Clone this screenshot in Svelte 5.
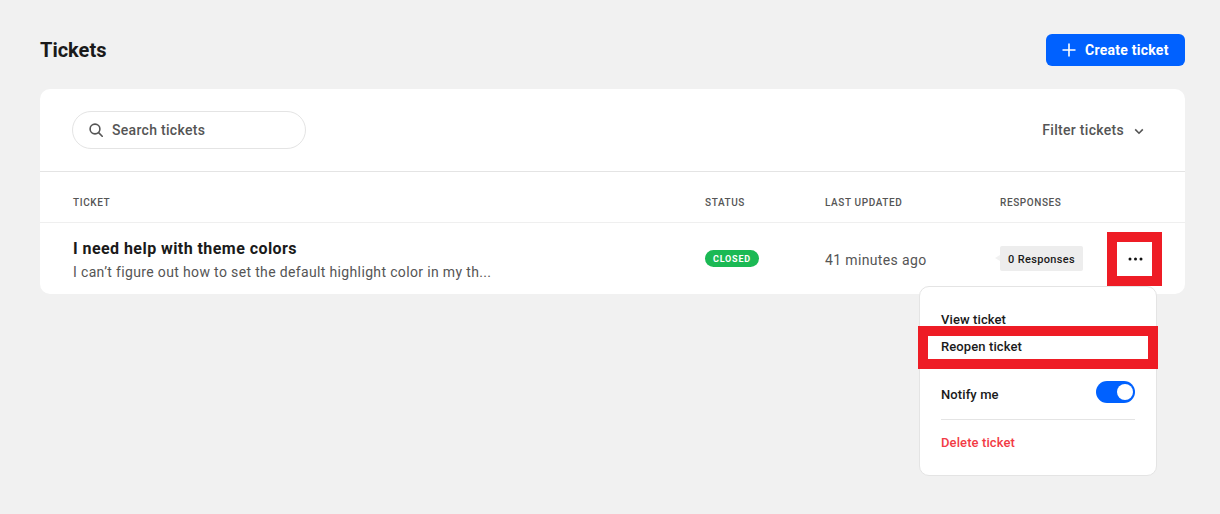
<script>
  let notify = $state(true);
  const ticket = {
    title: 'I need help with theme colors',
    excerpt: 'I can’t figure out how to set the default highlight color in my th...',
    status: 'Closed',
    updated: '41 minutes ago',
    responses: '0 Responses'
  };
</script>

<div class="page">
  <header class="top">
    <h1>Tickets</h1>
    <button class="create">
      <svg width="14" height="14" viewBox="0 0 14 14" fill="none" stroke="#fff" stroke-width="1.6"><path d="M7 .5v13M.5 7h13" /></svg>
      Create ticket
    </button>
  </header>

  <section class="card">
    <div class="toolbar">
      <div class="search">
        <svg width="14" height="14" viewBox="0 0 14 14" fill="none" stroke="#555" stroke-width="1.6"><circle cx="6" cy="6" r="4.9" /><path d="M9.6 9.6l3.6 3.6" stroke-linecap="round" /></svg>
        <span>Search tickets</span>
      </div>
      <div class="filter">
        Filter tickets
        <svg width="10" height="7" viewBox="0 0 10 7" fill="none" stroke="#555" stroke-width="1.6"><path d="M1.2 1.4L5 5.2l3.8-3.8" /></svg>
      </div>
    </div>

    <div class="grid head">
      <div>Ticket</div>
      <div>Status</div>
      <div>Last updated</div>
      <div>Responses</div>
    </div>

    <div class="grid row">
      <div class="info">
        <div class="title">{ticket.title}</div>
        <div class="excerpt">{ticket.excerpt}</div>
      </div>
      <div class="status-cell"><span class="badge">{ticket.status}</span></div>
      <div class="updated">{ticket.updated}</div>
      <div class="resp-cell"><span class="bubble">{ticket.responses}</span></div>
      <div class="actions">
        <button class="more" aria-label="More">
          <svg width="15" height="4" viewBox="0 0 15 4" fill="#111"><circle cx="2" cy="2" r="1.5" /><circle cx="7.5" cy="2" r="1.5" /><circle cx="13" cy="2" r="1.5" /></svg>
        </button>
        <div class="menu">
          <div class="item first">View ticket</div>
          <div class="item reopen">Reopen ticket</div>
          <div class="item notify">
            Notify me
            <button class="switch" class:on={notify} aria-label="Notify me" onclick={() => (notify = !notify)}><span></span></button>
          </div>
          <div class="item danger">Delete ticket</div>
        </div>
      </div>
    </div>
  </section>
</div>

<style>
  :global(body) {
    margin: 0;
    background: #f1f1f1;
  }

  .page {
    box-sizing: border-box;
    height: 514px;
    padding: 34px 35px 0 40px;
    font-family: Roboto, sans-serif;
    color: #1a1a1a;
    overflow: hidden;
  }

  button {
    font-family: inherit;
    border: 0;
    padding: 0;
    cursor: pointer;
  }

  .top {
    display: flex;
    justify-content: space-between;
    align-items: center;
    height: 32px;
    margin-bottom: 23px;
  }

  h1 {
    margin: 0;
    font-size: 20px;
    font-weight: 700;
  }

  .create {
    display: flex;
    align-items: center;
    gap: 9px;
    width: 139px;
    height: 32px;
    padding-left: 16px;
    box-sizing: border-box;
    background: #0061ff;
    color: #fff;
    border-radius: 6px;
    font-size: 14px;
    font-weight: 700;
    letter-spacing: 0.25px;
  }

  .card {
    background: #fff;
    border-radius: 10px;
    height: 205px;
  }

  .toolbar {
    display: flex;
    justify-content: space-between;
    align-items: center;
    box-sizing: border-box;
    height: 83px;
    padding: 0 41px 1px 32px;
    border-bottom: 1px solid #e4e4e4;
  }

  .search {
    display: flex;
    align-items: center;
    gap: 9px;
    box-sizing: border-box;
    width: 234px;
    height: 38px;
    padding-left: 16px;
    border: 1px solid #e4e4e4;
    border-radius: 19px;
    font-size: 14px;
    font-weight: 500;
    letter-spacing: 0.3px;
    color: #555;
  }

  .filter {
    display: flex;
    align-items: center;
    gap: 10px;
    font-size: 14px;
    font-weight: 500;
    letter-spacing: 0.3px;
    color: #555;
  }

  .filter svg {
    margin-top: 3px;
  }

  .grid {
    display: grid;
    grid-template-columns: 632px 120px 175px 107px 1fr;
    padding-left: 33px;
    align-items: center;
  }

  .head {
    height: 51px;
    box-sizing: border-box;
    border-bottom: 1px solid #efefef;
    font-size: 10px;
    font-weight: 500;
    letter-spacing: 0.6px;
    text-transform: uppercase;
    color: #555;
    padding-top: 10px;
  }

  .row {
    height: 71px;
  }

  .info {
    padding-top: 2px;
  }

  .title {
    font-size: 16px;
    font-weight: 700;
    letter-spacing: 0.44px;
    line-height: 20px;
  }

  .excerpt {
    font-size: 14px;
    line-height: 18px;
    margin-top: 4px;
    letter-spacing: 0.35px;
    color: #555;
  }

  .badge {
    display: inline-block;
    height: 17px;
    line-height: 18px;
    padding: 0 8px;
    border-radius: 9px;
    background: #1bb954;
    color: #fff;
    font-size: 9px;
    font-weight: 700;
    letter-spacing: 0.8px;
    text-transform: uppercase;
    vertical-align: top;
  }

  .status-cell {
    height: 17px;
  }

  .updated {
    font-size: 14px;
    letter-spacing: 0.36px;
    color: #555;
    margin-top: 2px;
  }

  .bubble {
    position: relative;
    display: inline-block;
    height: 25px;
    line-height: 27px;
    padding: 0 8px;
    background: #ededed;
    border-radius: 2px;
    font-size: 11px;
    font-weight: 500;
    letter-spacing: 0.35px;
    color: #1a1a1a;
    vertical-align: top;
  }

  .bubble::before {
    content: '';
    position: absolute;
    left: -5px;
    top: 9px;
    border: 3px solid transparent;
    border-left: 0;
    border-right: 5px solid #f1f1f1;
  }

  .resp-cell {
    height: 25px;
  }

  .actions {
    position: relative;
    height: 54px;
    width: 55px;
    margin-top: 1px;
  }

  .more {
    display: flex;
    align-items: center;
    justify-content: center;
    box-sizing: border-box;
    width: 55px;
    height: 54px;
    background: #fff;
    border: 10px solid #ee1c25;
  }

  .more svg {
    margin-left: 2px;
  }

  .menu {
    position: absolute;
    top: 54px;
    right: 5px;
    box-sizing: border-box;
    width: 238px;
    height: 190px;
    padding: 0 21px;
    background: #fff;
    border: 1px solid #e4e4e4;
    border-radius: 10px;
    font-size: 13px;
    font-weight: 500;
    letter-spacing: 0.1px;
  }

  .item {
    display: flex;
    align-items: center;
    justify-content: space-between;
  }

  .first {
    height: 16px;
    margin-top: 24px;
  }

  .reopen {
    box-sizing: border-box;
    height: 43px;
    margin: -1px -23px 0;
    padding: 0 0 2px 13px;
    border: 10px solid #ee1c25;
    background: #fff;
  }

  .notify {
    height: 51px;
    padding-top: 1px;
    box-sizing: border-box;
    border-bottom: 1px solid #e4e4e4;
  }

  .notify .switch {
    margin-top: -5px;
  }

  .switch {
    position: relative;
    width: 39px;
    height: 22px;
    border-radius: 11px;
    background: #c9c9c9;
  }

  .switch.on {
    background: #0061ff;
  }

  .switch span {
    position: absolute;
    top: 3px;
    left: 3px;
    width: 16px;
    height: 16px;
    border-radius: 50%;
    background: #fff;
  }

  .switch.on span {
    left: 21px;
  }

  .danger {
    height: 16px;
    margin-top: 14px;
    color: #f23a45;
  }
</style>
